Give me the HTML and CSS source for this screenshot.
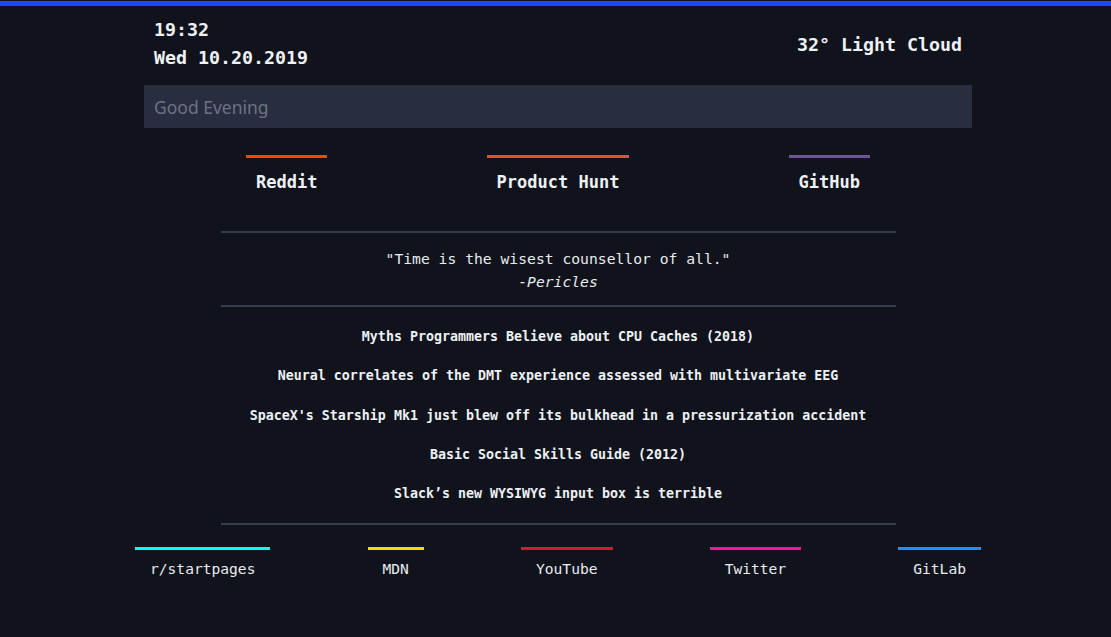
FILE: index.html
```html
<!DOCTYPE html>
<html lang="en">
<head>
<meta charset="utf-8">
<title>Startpage</title>
<link rel="stylesheet" href="styles.css">
</head>
<body>
<div class="topbar"></div>
<main class="page">
  <header class="header">
    <div class="clock">
      <div>19:32</div>
      <div>Wed 10.20.2019</div>
    </div>
    <div class="weather">32° Light Cloud</div>
  </header>
  <div class="search"><span class="placeholder">Good Evening</span></div>
  <nav class="nav">
    <a class="nav-item reddit">Reddit</a>
    <a class="nav-item ph">Product Hunt</a>
    <a class="nav-item github">GitHub</a>
  </nav>
  <section class="feed">
    <div class="quote">
      <div>"Time is the wisest counsellor of all."</div>
      <div class="author">-Pericles</div>
    </div>
    <ul class="headlines">
      <li>Myths Programmers Believe about CPU Caches (2018)</li>
      <li>Neural correlates of the DMT experience assessed with multivariate EEG</li>
      <li>SpaceX's Starship Mk1 just blew off its bulkhead in a pressurization accident</li>
      <li>Basic Social Skills Guide (2012)</li>
      <li>Slack’s new WYSIWYG input box is terrible</li>
    </ul>
  </section>
  <nav class="bottom">
    <a class="bottom-item startpages">r/startpages</a>
    <a class="bottom-item mdn">MDN</a>
    <a class="bottom-item youtube">YouTube</a>
    <a class="bottom-item twitter">Twitter</a>
    <a class="bottom-item gitlab">GitLab</a>
  </nav>
</main>
</body>
</html>
```
FILE: styles.css
```css
html, body {
  margin: 0;
  padding: 0;
  background: #10131b;
}
body {
  color: #eef1f6;
  font-family: "DejaVu Sans Mono", "Liberation Mono", monospace;
  height: 637px;
  overflow: hidden;
}
.topbar {
  margin-top: 1px;
  height: 5px;
  background: #2442ff;
}
.page {
  width: 828px;
  margin-left: 144px;
}
.header {
  margin-top: 10px;
  height: 56px;
  padding: 0 10px;
  display: flex;
  justify-content: space-between;
  align-items: center;
  font-weight: bold;
  font-size: 18.3px;
}
.clock {
  line-height: 28px;
}
.search {
  margin-top: 13px;
  height: 43px;
  background: #282d3f;
  padding-left: 10px;
  display: flex;
  align-items: center;
}
.placeholder {
  font-family: "Noto Sans", "Open Sans", sans-serif;
  font-size: 17.5px;
  color: #6e7384;
}
.nav {
  width: 624px;
  margin: 27px auto 0;
  display: flex;
  justify-content: space-between;
}
.nav-item {
  border-top: 3px solid;
  padding: 13px 10px 0;
  font-weight: bold;
  font-size: 17px;
  line-height: 22px;
  color: #eef1f6;
}
.reddit { border-color: #ff4500; }
.ph { border-color: #da552f; }
.github { border-color: #6e5494; }
.feed {
  width: 675px;
  margin: 38px auto 0;
  text-align: center;
}
.quote {
  border-top: 2px solid #363c4c;
  border-bottom: 2px solid #363c4c;
  padding: 14px 0 12px;
  font-size: 14.7px;
  line-height: 23px;
  color: #e8ebf0;
}
.author {
  font-style: italic;
}
.headlines {
  list-style: none;
  margin: 0;
  padding: 10px 0 10px;
  border-bottom: 2px solid #363c4c;
  font-weight: bold;
  font-size: 13.3px;
  line-height: 39.25px;
}
.bottom {
  margin: 22px -9px 0;
  display: flex;
  justify-content: space-between;
}
.bottom-item {
  border-top: 3px solid;
  padding: 9px 15px 0;
  font-size: 14.6px;
  line-height: 20px;
  color: #e8ebf0;
}
.startpages { border-color: #00ffff; }
.mdn { border-color: #ffd700; }
.youtube { border-color: #dc143c; }
.twitter { border-color: #ff1493; }
.gitlab { border-color: #1e90ff; }
```
